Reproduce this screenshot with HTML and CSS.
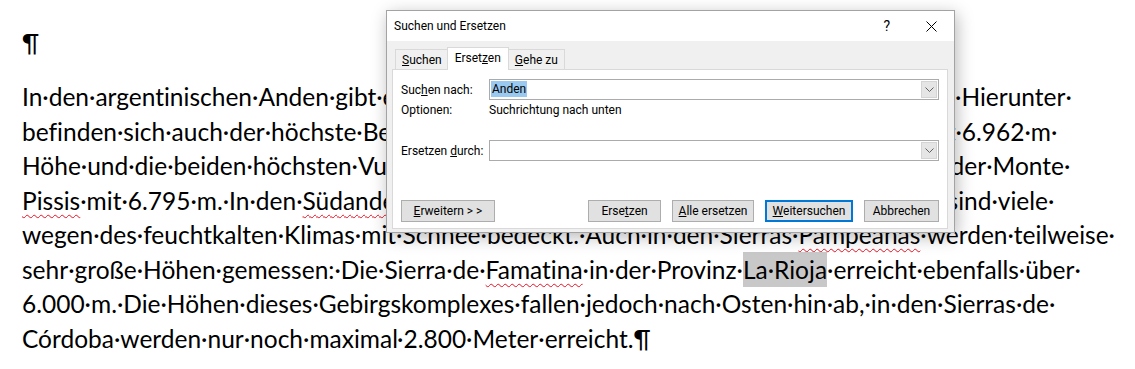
FILE: index.html
```html
<!DOCTYPE html>
<html lang="de">
<head>
  <meta charset="UTF-8">
  <meta name="viewport" content="width=device-width, initial-scale=1.0">
  <title>Suchen und Ersetzen</title>
  <link rel="stylesheet" href="styles.css">
</head>
<body>
  <div class="document">
    <p class="empty-para">¶</p>
    <p class="para">
      <span class="line">In·den·argentinischen·Anden·gibt·es·zahlreiche·Gipfel·mit·Höhen·von·mehr·als·6.000·m.·Hierunter·</span>
      <span class="line">befinden·sich·auch·der·höchste·Berg·Amerikas·und·der·Südhemisphäre,·Aconcagua,·mit·6.962·m·</span>
      <span class="line">Höhe·und·die·beiden·höchsten·Vulkane·der·Erde,·der·Ojos·del·Salado·mit·6.893·m·und·der·Monte·</span>
      <span class="line"><span class="typo">Pissis</span>·mit·6.795·m.·In·den·<span class="typo">Südanden</span>·sind·die·Gipfel·zwar·erheblich·niedriger,·trotzdem·sind·viele·</span>
      <span class="line">wegen·des·feuchtkalten·Klimas·mit·Schnee·bedeckt.·Auch·in·den·Sierras·<span class="typo">Pampeanas</span>·werden·teilweise·</span>
      <span class="line">sehr·große·Höhen·gemessen:·Die·Sierra·de·<span class="typo">Famatina</span>·in·der·Provinz·<span class="found">La·Rioja</span>·erreicht·ebenfalls·über·</span>
      <span class="line">6.000·m.·Die·Höhen·dieses·Gebirgskomplexes·fallen·jedoch·nach·Osten·hin·ab,·in·den·Sierras·de·</span>
      <span class="line">Córdoba·werden·nur·noch·maximal·2.800·Meter·erreicht.¶</span>
    </p>
  </div>

  <div class="dialog">
    <div class="titlebar">
      <span class="title">Suchen und Ersetzen</span>
      <span class="help">?</span>
      <svg class="close" width="11" height="11" viewBox="0 0 11 11">
        <path d="M0.5 0.5 L10.5 10.5 M10.5 0.5 L0.5 10.5" stroke="#000" stroke-width="1" fill="none"/>
      </svg>
    </div>
    <div class="dialog-body">
      <div class="tabs">
        <div class="tab"><u>S</u>uchen</div>
        <div class="tab active">Erset<u>z</u>en</div>
        <div class="tab"><u>G</u>ehe zu</div>
      </div>
      <div class="panel">
        <div class="field">
          <span class="label">Suc<u>h</u>en nach:</span>
          <div class="combo">
            <span class="value"><span class="selected">Anden</span></span>
            <span class="drop">
              <svg width="9" height="5" viewBox="0 0 9 5"><path d="M0.5 0.5 L4.5 4.5 L8.5 0.5" stroke="#606060" fill="none"/></svg>
            </span>
          </div>
        </div>
        <div class="field options">
          <span class="label">Optionen:</span>
          <span>Suchrichtung nach unten</span>
        </div>
        <div class="field replace">
          <span class="label">Ersetzen <u>d</u>urch:</span>
          <div class="combo">
            <span class="value"></span>
            <span class="drop">
              <svg width="9" height="5" viewBox="0 0 9 5"><path d="M0.5 0.5 L4.5 4.5 L8.5 0.5" stroke="#606060" fill="none"/></svg>
            </span>
          </div>
        </div>
        <div class="buttons">
          <button class="more"><u>E</u>rweitern &gt; &gt;</button>
          <button class="replace-btn">Erse<u>t</u>zen</button>
          <button class="replace-all"><u>A</u>lle ersetzen</button>
          <button class="next default"><u>W</u>eitersuchen</button>
          <button class="cancel">Abbrechen</button>
        </div>
      </div>
    </div>
  </div>
</body>
</html>
```

FILE: styles.css
```css
* {
  margin: 0;
  padding: 0;
  box-sizing: border-box;
}

body {
  background: #fff;
  color: #000;
  font-family: Lato, "Liberation Sans", sans-serif;
  overflow: hidden;
}

/* document behind the dialog */
.document {
  padding: 26px 0 0 22px;
  font-size: 24.5px;
  font-variant-ligatures: none;
}

.empty-para {
  line-height: 34px;
  margin-bottom: 20px;
}

.line {
  display: block;
  white-space: nowrap;
  line-height: 34.5px;
}

.typo {
  text-decoration: underline wavy #e81123;
  text-decoration-thickness: 1px;
  text-underline-offset: 4px;
}

.found {
  background: #c8c8c8;
  padding: 3px 0;
}

/* dialog */
.dialog {
  position: absolute;
  left: 386px;
  top: 10px;
  width: 569px;
  height: 223px;
  border: 1px solid #a3a3a3;
  background: #f0f0f0;
  font-family: Roboto, "Noto Sans", sans-serif;
  font-size: 12px;
  box-shadow: 2px 4px 16px rgba(0, 0, 0, 0.28);
  display: flex;
  flex-direction: column;
}

.titlebar {
  height: 30px;
  background: #fff;
  display: flex;
  align-items: center;
  padding-left: 7px;
}

.title {
  flex-grow: 1;
}

.help {
  font-size: 14px;
  margin-right: 36px;
}

.close {
  margin-right: 17px;
}

.dialog-body {
  padding: 6px 6px 0 5px;
}

.tabs {
  display: flex;
  align-items: flex-end;
  padding-left: 3px;
  height: 22px;
}

.tab {
  height: 20px;
  padding: 0 6px;
  line-height: 20px;
  border: 1px solid #d9d9d9;
  border-bottom: none;
  background: #f0f0f0;
}

.tab + .tab {
  border-left: none;
}

.tab.active {
  height: 23px;
  line-height: 21px;
  margin: 0 -1px -1px -2px;
  padding: 0 7px;
  background: #fff;
  border-left: 1px solid #d9d9d9;
  position: relative;
  z-index: 1;
}

.tab.active + .tab {
  border-left: none;
  margin-left: 1px;
}

.panel {
  height: 160px;
  background: #fff;
  border: 1px solid #d9d9d9;
  padding: 9px 8px 6px 8px;
  display: flex;
  flex-direction: column;
}

.field {
  display: flex;
  align-items: center;
}

.label {
  width: 88px;
  flex-shrink: 0;
}

.combo {
  flex-grow: 1;
  height: 21px;
  border: 1px solid #ababab;
  display: flex;
  align-items: stretch;
}

.value {
  flex-grow: 1;
  padding: 1px 0 0 1px;
  line-height: 17px;
}

.selected {
  background: #99c9ef;
  padding: 1px 1px;
}

.drop {
  width: 16px;
  margin: 1px;
  background: #e5e5e5;
  border: 1px solid #d4d4d4;
  display: flex;
  align-items: center;
  justify-content: center;
}

.options {
  margin-top: 1px;
  height: 18px;
}

.replace {
  margin-top: 21px;
}

.buttons {
  margin-top: auto;
  display: flex;
  gap: 11px;
}

.buttons button {
  height: 22px;
  font-family: Roboto, "Noto Sans", sans-serif;
  font-size: 12px;
  color: #000;
  background: #e1e1e1;
  border: 1px solid #adadad;
}

button.more {
  width: 94px;
  margin-right: auto;
}

button.replace-btn {
  width: 73px;
}

button.replace-all {
  width: 82px;
}

button.next {
  width: 88px;
  border: 2px solid #0078d7;
}

button.cancel {
  width: 75px;
}
```
